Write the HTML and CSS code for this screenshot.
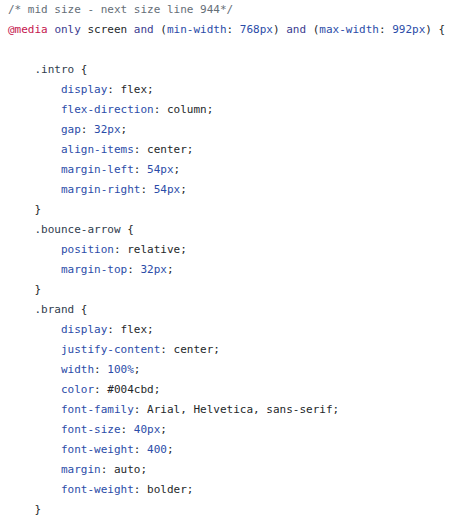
FILE: index.html
```html
<!DOCTYPE html>
<html>
<head>
<meta charset="utf-8">
<link rel="stylesheet" href="styles.css">
</head>
<body>
<pre class="code"><span class="c">/* mid size - next size line 944*/</span>
<span class="at">@media</span> <span class="kw">only</span> screen <span class="kw">and</span> (<span class="p">min-width</span>: <span class="n">768px</span>) <span class="kw">and</span> (<span class="p">max-width</span>: <span class="n">992px</span>) {

    <span class="sel">.intro</span> {
        <span class="p">display</span>: flex;
        <span class="p">flex-direction</span>: column;
        <span class="p">gap</span>: <span class="n">32px</span>;
        <span class="p">align-items</span>: center;
        <span class="p">margin-left</span>: <span class="n">54px</span>;
        <span class="p">margin-right</span>: <span class="n">54px</span>;
    }
    <span class="sel">.bounce-arrow</span> {
        <span class="p">position</span>: relative;
        <span class="p">margin-top</span>: <span class="n">32px</span>;
    }
    <span class="sel">.brand</span> {
        <span class="p">display</span>: flex;
        <span class="p">justify-content</span>: center;
        <span class="p">width</span>: <span class="n">100%</span>;
        <span class="p">color</span>: #004cbd;
        <span class="p">font-family</span>: Arial, Helvetica, sans-serif;
        <span class="p">font-size</span>: <span class="n">40px</span>;
        <span class="p">font-weight</span>: <span class="n">400</span>;
        <span class="p">margin</span>: auto;
        <span class="p">font-weight</span>: bolder;
    }</pre>
</body>
</html>
```
FILE: styles.css
```css
html, body {
  margin: 0;
  padding: 0;
  background: #ffffff;
}
.code {
  margin: 0;
  padding: 0 0 0 8px;
  font-family: "DejaVu Sans Mono", "Liberation Mono", monospace;
  font-size: 11px;
  line-height: 20px;
  color: #242729;
  white-space: pre;
}
.c { color: #656e77; }
.at { color: #c5164e; }
.kw { color: #3b3b8f; }
.p { color: #2b4ca8; }
.n { color: #2b4ca8; }
.sel { color: #2f3c4e; }
```
